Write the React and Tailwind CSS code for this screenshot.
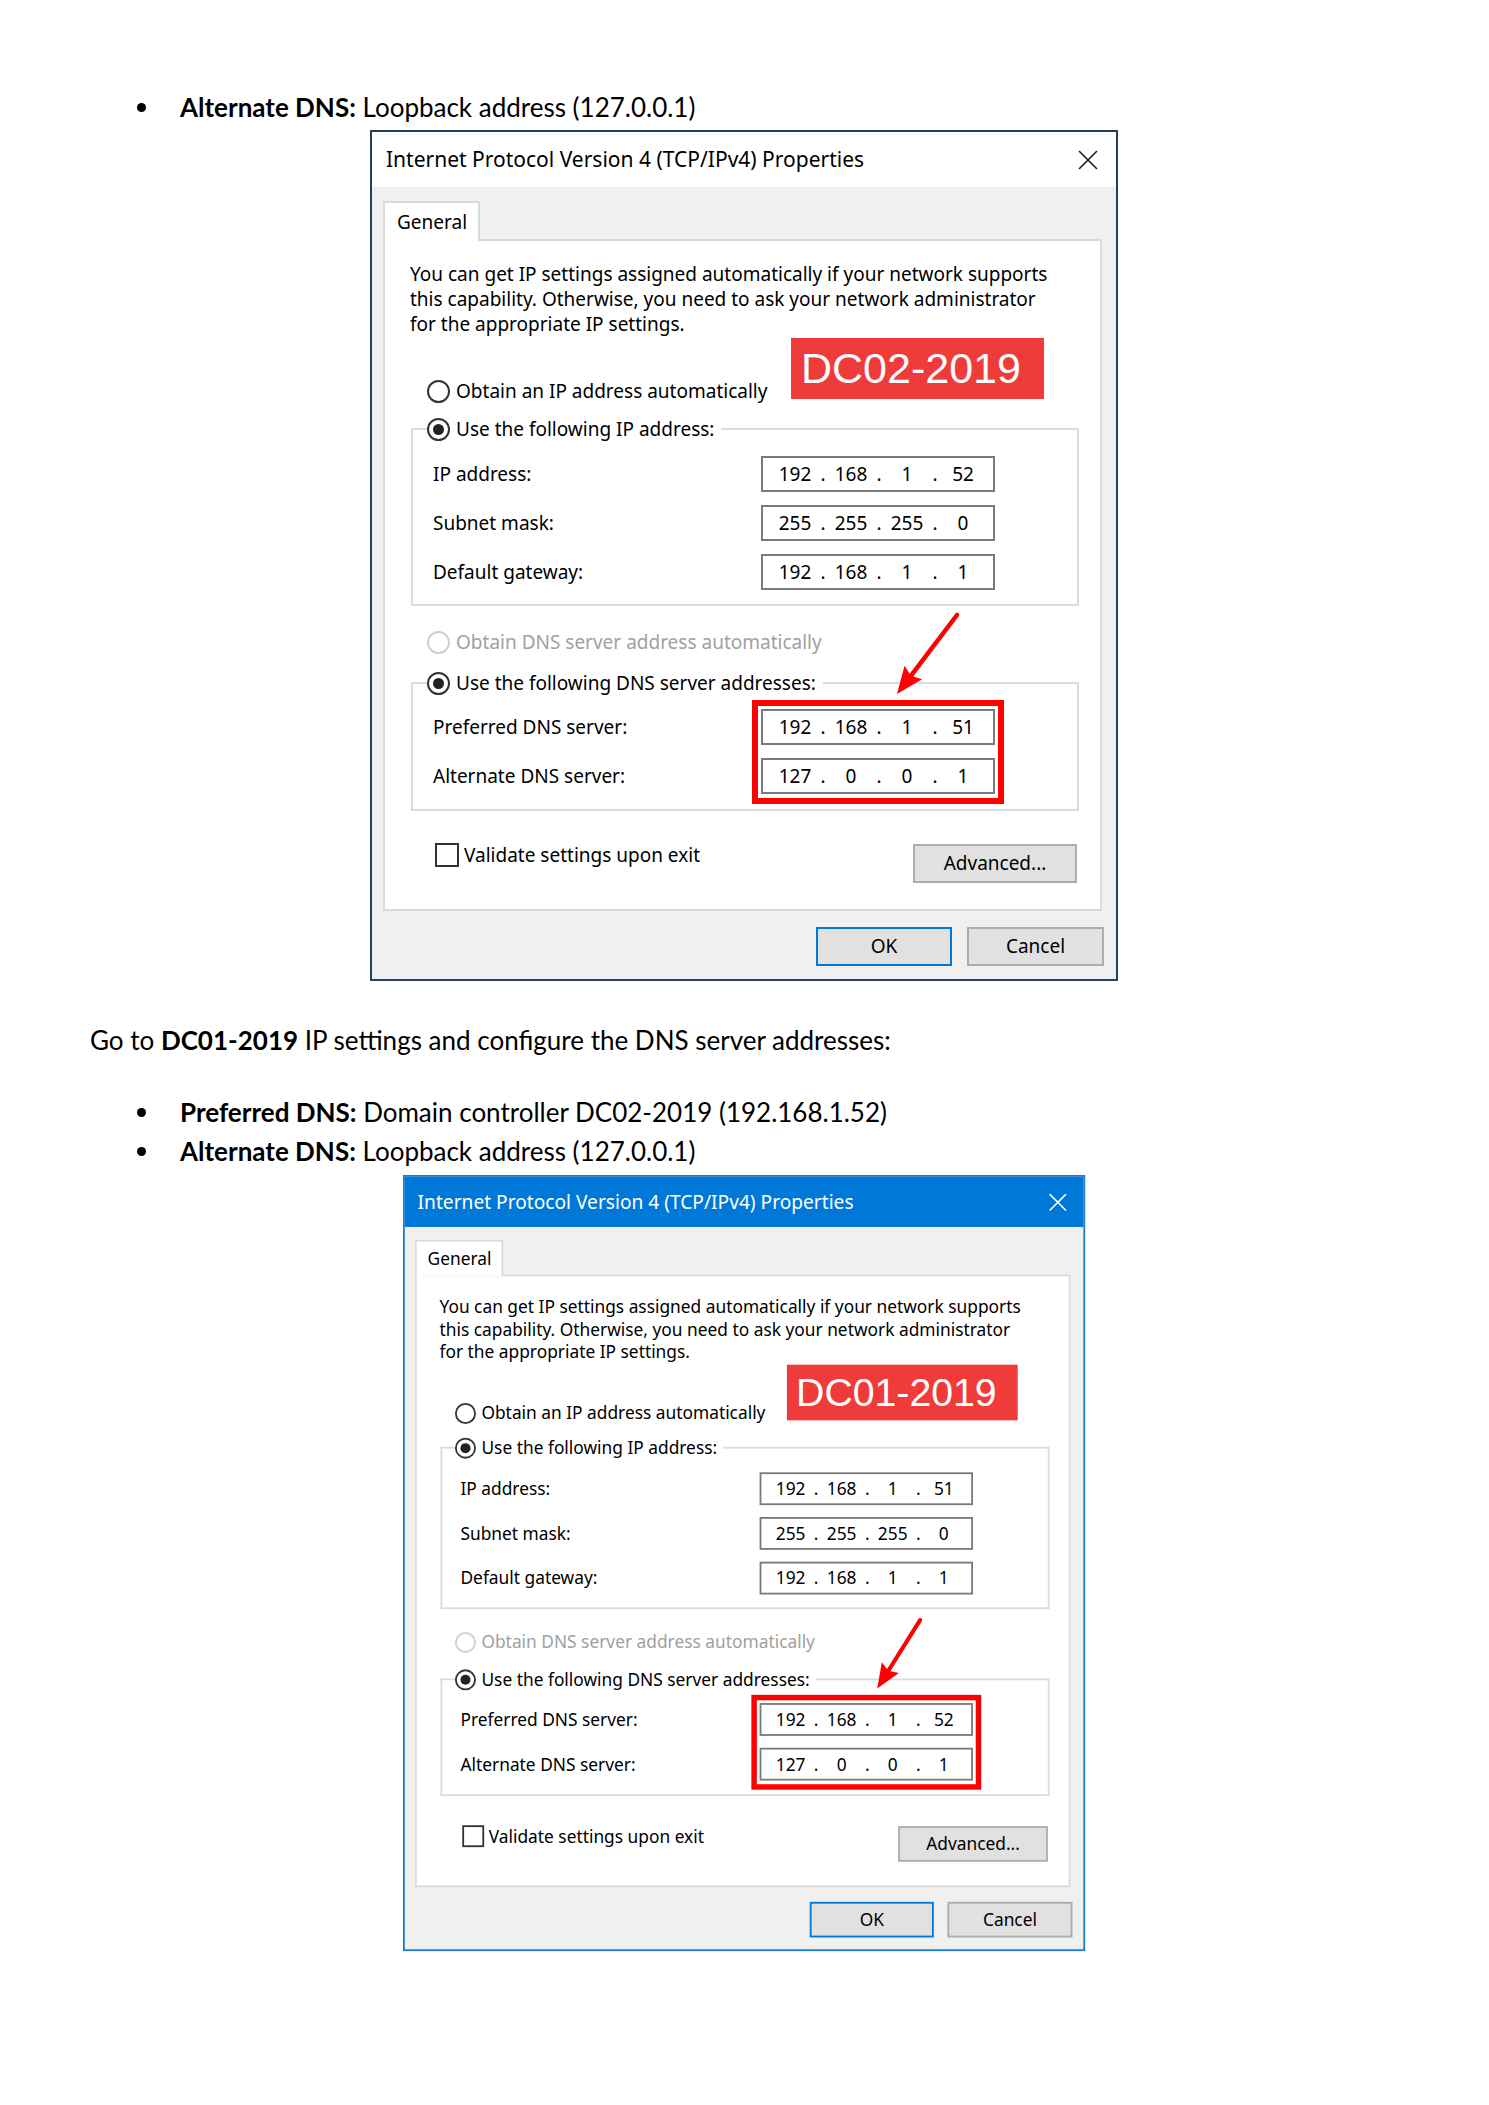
import React from "react";

// Windows-style radio button
function Radio({ checked = false, disabled = false }) {
  return (
    <span
      className={`w-[23px] h-[23px] rounded-full border-2 bg-white flex items-center justify-center shrink-0 ${
        disabled ? "border-[#cfcfcf]" : "border-[#333333]"
      }`}
    >
      {checked && <span className="w-[11px] h-[11px] rounded-full bg-[#222222]" />}
    </span>
  );
}

// Four-octet IP address box
function IpField({ parts }) {
  return (
    <div className="w-[234px] h-[36px] border-2 border-[#7a7a7a] bg-white flex items-center pl-[8px] leading-none">
      {parts.map((p, i) => (
        <React.Fragment key={i}>
          <span className="w-[48px] text-center">{p}</span>
          {i < 3 && <span className="w-[8px] text-center">.</span>}
        </React.Fragment>
      ))}
    </div>
  );
}

// Red annotation arrow, coordinates in dialog space
function Arrow({ x1, y1, x2, y2 }) {
  const dx = x2 - x1;
  const dy = y2 - y1;
  const len = Math.hypot(dx, dy);
  const ux = dx / len;
  const uy = dy / len;
  const hl = 27;
  const hw = 11;
  const bx = x2 - ux * hl;
  const by = y2 - uy * hl;
  const pts = `${x2},${y2} ${bx - uy * hw},${by + ux * hw} ${bx + ux * 4},${by + uy * 4} ${bx + uy * hw},${by - ux * hw}`;
  return (
    <svg className="absolute inset-0 pointer-events-none" width="748" height="851" viewBox="0 0 748 851">
      <line x1={x1} y1={y1} x2={bx + ux * 6} y2={by + uy * 6} stroke="#ff0000" strokeWidth="4.5" strokeLinecap="round" />
      <polygon points={pts} fill="#ff0000" />
    </svg>
  );
}

function Dialog({ blue, label, ip, dns, arrow }) {
  const ipRows = [
    ["IP address:", ip],
    ["Subnet mask:", ["255", "255", "255", "0"]],
    ["Default gateway:", ["192", "168", "1", "1"]],
  ];
  return (
    <div
      className={`relative w-[748px] h-[851px] border-2 bg-[#f0f0f0] text-[19px] text-black font-['Noto_Sans',sans-serif] ${
        blue ? "border-[#1c7bd4]" : "border-[#2b3e57]"
      }`}
    >
      {/* title bar */}
      <div
        className={`h-[55px] flex items-center justify-between pl-[14px] pr-[18px] ${
          blue ? "bg-[#0078d7] text-white" : "bg-white text-black"
        }`}
      >
        <span className="text-[21px]">Internet Protocol Version 4 (TCP/IPv4) Properties</span>
        <svg width="20" height="20" viewBox="0 0 20 20" className="mt-[1px]">
          <path d="M1 1 L19 19 M19 1 L1 19" stroke={blue ? "#ffffff" : "#222222"} strokeWidth="1.7" fill="none" />
        </svg>
      </div>

      {/* body */}
      <div className="pl-[11px] pt-[14px]">
        <div className="relative z-10 w-[97px] h-[40px] -mb-[2px] bg-white border-2 border-b-0 border-[#d9d9d9] pl-[12px] flex items-center">
          General
        </div>
        <div className="w-[719px] h-[672px] bg-white border-2 border-[#d9d9d9] pl-[26px] pr-[21px]">
          <p className="-ml-px mt-[21px] leading-[25px]">
            You can get IP settings assigned automatically if your network supports
            <br />
            this capability. Otherwise, you need to ask your network administrator
            <br />
            for the appropriate IP settings.
          </p>

          <div className="mt-[42px] h-[24px] flex items-center gap-[6px] ml-[16px]">
            <Radio />
            <span>Obtain an IP address automatically</span>
          </div>

          <fieldset className="mt-[14px] border-2 border-[#dcdcdc] min-w-0">
            <legend className="ml-[14px] pr-[7px]">
              <div className="h-[24px] flex items-center gap-[6px]">
                <Radio checked />
                <span>Use the following IP address:</span>
              </div>
            </legend>
            <div className="flex flex-col gap-[13px] mt-[15px] pb-[14px] pl-[20px]">
              {ipRows.map(([name, parts]) => (
                <div key={name} className="flex items-center">
                  <span className="w-[328px]">{name}</span>
                  <IpField parts={parts} />
                </div>
              ))}
            </div>
          </fieldset>

          <div className="mt-[24px] h-[24px] flex items-center gap-[6px] ml-[16px] text-[#a0a0a0]">
            <Radio disabled />
            <span>Obtain DNS server address automatically</span>
          </div>

          <fieldset className="mt-[17px] border-2 border-[#dcdcdc] min-w-0">
            <legend className="ml-[14px] pr-[7px]">
              <div className="h-[24px] flex items-center gap-[6px]">
                <Radio checked />
                <span>Use the following DNS server addresses:</span>
              </div>
            </legend>
            <div className="flex mt-[5px] pb-[5px] pl-[20px]">
              <div className="w-[319px] flex flex-col gap-[13px] pt-[9px]">
                <span className="h-[36px] flex items-center">Preferred DNS server:</span>
                <span className="h-[36px] flex items-center">Alternate DNS server:</span>
              </div>
              <div className="border-[6px] border-[#ff0000] pt-[3px] pb-[4px] px-[3px] flex flex-col gap-[13px]">
                <IpField parts={dns} />
                <IpField parts={["127", "0", "0", "1"]} />
              </div>
            </div>
          </fieldset>

          <div className="flex items-start justify-between">
            <div className="mt-[32px] ml-[24px] h-[24px] flex items-center gap-[5px]">
              <span className="w-[24px] h-[24px] border-2 border-[#333333] bg-white" />
              <span>Validate settings upon exit</span>
            </div>
            <button className="mt-[33px] mr-[2px] w-[164px] h-[39px] bg-[#e1e1e1] border-2 border-[#adadad] flex items-center justify-center">
              Advanced...
            </button>
          </div>
        </div>
      </div>

      {/* dialog buttons */}
      <div className="mt-[16px] pr-[12px] flex justify-end gap-[15px]">
        <button className="w-[136px] h-[39px] bg-[#e1e1e1] border-2 border-[#0078d7] flex items-center justify-center">
          OK
        </button>
        <button className="w-[137px] h-[39px] bg-[#e1e1e1] border-2 border-[#adadad] flex items-center justify-center">
          Cancel
        </button>
      </div>

      {/* host name tag */}
      <div className="absolute left-[419px] top-[206px] w-[253px] h-[61px] bg-[#f03b3b] text-white font-['Liberation_Sans',Arial,sans-serif] text-[43px] leading-none flex items-center pl-[10px]">
        {label}
      </div>

      <Arrow {...arrow} />
    </div>
  );
}

function Bullet({ children }) {
  return (
    <div className="h-[39px] flex items-center">
      <span className="ml-[137px] w-[9px] h-[9px] rounded-full bg-black shrink-0" />
      <span className="ml-[34px]">{children}</span>
    </div>
  );
}

export default function App() {
  return (
    <div className="w-[1489px] min-h-[2105px] bg-white text-black text-[26px] font-['Lato',sans-serif]">
      <div className="pt-[88px]">
        <Bullet>
          <b>Alternate DNS:</b> Loopback address (127.0.0.1)
        </Bullet>

        <div className="ml-[370px] mt-[3px]">
          <Dialog
            label="DC02-2019"
            ip={["192", "168", "1", "52"]}
            dns={["192", "168", "1", "51"]}
            arrow={{ x1: 585, y1: 483, x2: 525, y2: 562 }}
          />
        </div>

        <p className="ml-[90px] mt-[40px] leading-[39px]">
          Go to <b>DC01-2019</b> IP settings and configure the DNS server addresses:
        </p>

        <div className="mt-[33px]">
          <Bullet>
            <b>Preferred DNS:</b> Domain controller DC02-2019 (192.168.1.52)
          </Bullet>
          <Bullet>
            <b>Alternate DNS:</b> Loopback address (127.0.0.1)
          </Bullet>
        </div>

        <div className="ml-[403px] mt-[4px] w-[682px] h-[776px]">
          <div className="origin-top-left scale-[0.912]">
            <Dialog
              blue
              label="DC01-2019"
              ip={["192", "168", "1", "51"]}
              dns={["192", "168", "1", "52"]}
              arrow={{ x1: 565, y1: 486, x2: 518, y2: 561 }}
            />
          </div>
        </div>
      </div>
    </div>
  );
}
